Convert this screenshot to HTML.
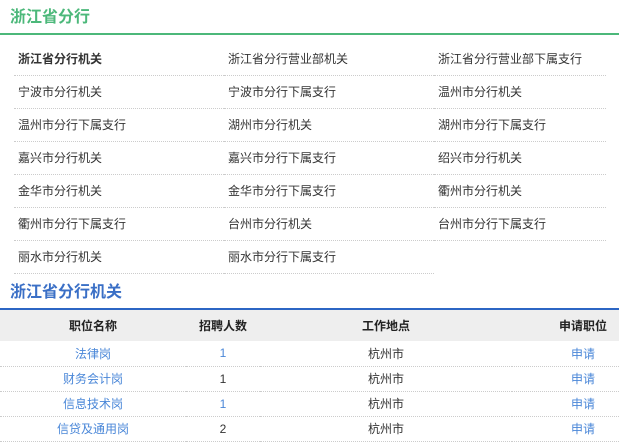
<!DOCTYPE html>
<html><head><meta charset="utf-8"><style>
*{margin:0;padding:0;box-sizing:border-box}
body{width:619px;height:441px;background:#fff;font-family:"Liberation Sans","Noto Sans CJK SC",sans-serif;font-size:12px;color:#333;overflow:hidden;position:relative}
.t1{position:absolute;left:10px;top:6px;font-size:16px;font-weight:bold;color:#4cb87a;line-height:24px}
.l1{position:absolute;left:0;top:33px;width:619px;height:2px;background:#4cb87a}
.grid{position:absolute;left:14px;top:43px;width:592px}
.c{position:absolute;width:210px;height:33px;line-height:32px;padding-left:4px;border-bottom:1px dotted #ccc;white-space:nowrap}
.t2{position:absolute;left:10px;top:281px;font-size:16px;font-weight:bold;color:#3a6fc6;line-height:24px}
.l2{position:absolute;left:0;top:308px;width:619px;height:2px;background:#2c66c4}
table{position:absolute;left:0;top:310px;width:619px;border-collapse:collapse}
th{height:31px;background:#eee;font-weight:bold;color:#222;font-size:12px}
td{height:25px;text-align:center;border-bottom:1px dotted #ccc}
.a{color:#4a87d8}
</style></head><body>
<div class="t1">浙江省分行</div><div class="l1"></div>
<div class="grid">
<div class="c" style="left:0;top:0;font-weight:bold">浙江省分行机关</div>
<div class="c" style="left:210px;top:0">浙江省分行营业部机关</div>
<div class="c" style="left:420px;top:0;width:172px">浙江省分行营业部下属支行</div>
<div class="c" style="left:0;top:33px">宁波市分行机关</div>
<div class="c" style="left:210px;top:33px">宁波市分行下属支行</div>
<div class="c" style="left:420px;top:33px;width:172px">温州市分行机关</div>
<div class="c" style="left:0;top:66px">温州市分行下属支行</div>
<div class="c" style="left:210px;top:66px">湖州市分行机关</div>
<div class="c" style="left:420px;top:66px;width:172px">湖州市分行下属支行</div>
<div class="c" style="left:0;top:99px">嘉兴市分行机关</div>
<div class="c" style="left:210px;top:99px">嘉兴市分行下属支行</div>
<div class="c" style="left:420px;top:99px;width:172px">绍兴市分行机关</div>
<div class="c" style="left:0;top:132px">金华市分行机关</div>
<div class="c" style="left:210px;top:132px">金华市分行下属支行</div>
<div class="c" style="left:420px;top:132px;width:172px">衢州市分行机关</div>
<div class="c" style="left:0;top:165px">衢州市分行下属支行</div>
<div class="c" style="left:210px;top:165px">台州市分行机关</div>
<div class="c" style="left:420px;top:165px;width:172px">台州市分行下属支行</div>
<div class="c" style="left:0;top:198px">丽水市分行机关</div>
<div class="c" style="left:210px;top:198px">丽水市分行下属支行</div>
</div>
<div class="t2">浙江省分行机关</div><div class="l2"></div>
<table>
<colgroup><col style="width:186px"><col style="width:74px"><col style="width:252px"><col style="width:107px"></colgroup>
<tr><th>职位名称</th><th>招聘人数</th><th>工作地点</th><th style="text-align:right;padding-right:12px">申请职位</th></tr>
<tr><td class="a">法律岗</td><td class="a">1</td><td>杭州市</td><td class="a" style="text-align:right;padding-right:24px">申请</td></tr>
<tr><td class="a">财务会计岗</td><td>1</td><td>杭州市</td><td class="a" style="text-align:right;padding-right:24px">申请</td></tr>
<tr><td class="a">信息技术岗</td><td class="a">1</td><td>杭州市</td><td class="a" style="text-align:right;padding-right:24px">申请</td></tr>
<tr><td class="a">信贷及通用岗</td><td>2</td><td>杭州市</td><td class="a" style="text-align:right;padding-right:24px">申请</td></tr>
</table>
</body></html>
